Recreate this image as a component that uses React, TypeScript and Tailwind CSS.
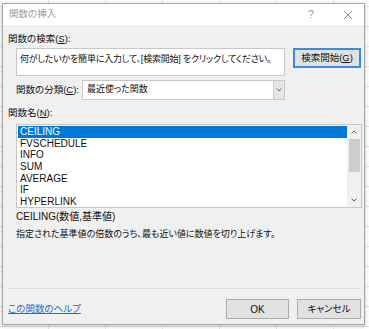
import React from "react";

const FONT = "font-['Liberation_Sans','Noto_Sans_CJK_JP',sans-serif] [font-feature-settings:'palt']";

const FUNCTIONS = ["CEILING", "FVSCHEDULE", "INFO", "SUM", "AVERAGE", "IF", "HYPERLINK"];

function Key({ k }: { k: string }) {
    return <span className="underline underline-offset-1">{k}</span>;
}

export default function App() {
    return (
        <div className={`${FONT} w-[369px] h-[329px] overflow-hidden bg-white bg-[linear-gradient(to_right,#e3e3e3_1px,transparent_1px),linear-gradient(to_bottom,#e3e3e3_1px,transparent_1px)] bg-[size:57px_20px] bg-[position:48px_6px] pt-[3px] pl-[2px]`}>
            <div className="w-[363px] h-[322px] border border-[#a8a8a8] bg-[#f0f0f0] shadow-[0_1px_4px_rgba(0,0,0,0.25)] flex flex-col text-[9px] text-[#111] whitespace-nowrap">
                {/* Title bar */}
                <div className="h-[21px] bg-white flex items-center pl-[6px] text-[#9a9a9a] text-[9.5px]">
                    <span className="flex-1">関数の挿入</span>
                    <span className="w-[20px] text-center text-[11px] mr-[22px]">?</span>
                    <svg width="10" height="10" viewBox="0 0 10 10" className="mr-[11px]">
                        <path d="M1 1 L9 9 M9 1 L1 9" stroke="#8a8a8a" strokeWidth="1" />
                    </svg>
                </div>

                {/* Body */}
                <div className="flex flex-col pl-[5px] pr-[3px]">
                    <div className="mt-[7px] h-[14px] leading-[14px] text-[9.5px]">関数の検索(<Key k="S" />):</div>

                    <div className="mt-[2px] flex items-start">
                        <div className="ml-[8px] w-[269px] h-[28px] bg-white border border-[#c8c8c8] px-[3px] pt-[3px] leading-[14px] tracking-[-0.2px]">
                            何がしたいかを簡単に入力して、[検索開始] をクリックしてください。
                        </div>
                        <button className="ml-[8px] w-[68px] h-[20px] bg-[#e1e1e1] border border-[#3c8be0] outline outline-1 outline-[#3c8be0] -outline-offset-2 flex items-center justify-center leading-none text-[9.5px]">
                            検索開始(<Key k="G" />)
                        </button>
                    </div>

                    <div className="mt-[4px] flex items-center">
                        <span className="ml-[8px] w-[66px] leading-[14px] text-[9.5px]">関数の分類(<Key k="C" />):</span>
                        <div className="w-[203px] h-[20px] bg-white border border-[#c8c8c8] flex items-center">
                            <span className="flex-1 pl-[4px]">最近使った関数</span>
                            <div className="w-[11px] h-full bg-[#e6e6e6] border-l border-[#d0d0d0] flex items-center justify-center">
                                <svg width="6" height="4" viewBox="0 0 6 4">
                                    <path d="M0.5 0.5 L3 3 L5.5 0.5" stroke="#707070" fill="none" strokeWidth="1" />
                                </svg>
                            </div>
                        </div>
                    </div>

                    <div className="mt-[6px] h-[14px] leading-[14px] text-[9.5px]">関数名(<Key k="N" />):</div>

                    <div className="mt-[4px] ml-[8px] w-[346px] h-[84px] bg-white border border-[#c8c8c8] flex">
                        <div className="flex-1 pt-[1px] pl-[1px]">
                            {FUNCTIONS.map((f, i) => (
                                <div key={f} className={`h-[11.7px] leading-[11.7px] pl-[2px] text-[10px] ${i === 0 ? "bg-[#0078d7] text-white" : "text-[#111]"}`}>
                                    {f}
                                </div>
                            ))}
                        </div>
                        <div className="w-[14px] bg-[#f0f0f0] flex flex-col items-center">
                            <div className="h-[14px] flex items-center justify-center">
                                <svg width="6" height="4" viewBox="0 0 6 4">
                                    <path d="M0.5 3.5 L3 1 L5.5 3.5" stroke="#606060" fill="none" strokeWidth="1" />
                                </svg>
                            </div>
                            <div className="w-[11px] h-[33px] bg-[#cdcdcd]" />
                            <div className="flex-1" />
                            <div className="h-[14px] flex items-center justify-center">
                                <svg width="6" height="4" viewBox="0 0 6 4">
                                    <path d="M0.5 0.5 L3 3 L5.5 0.5" stroke="#606060" fill="none" strokeWidth="1" />
                                </svg>
                            </div>
                        </div>
                    </div>

                    <div className="mt-[2px] ml-[8px] h-[14px] leading-[14px] text-[10px]">CEILING(数値,基準値)</div>
                    <div className="mt-[3px] ml-[8px] h-[14px] leading-[14px]">指定された基準値の倍数のうち、最も近い値に数値を切り上げます。</div>

                    <div className="mt-[47px] h-px bg-[#dcdcdc] mr-[1px]" />

                    <div className="mt-[10px] flex items-center">
                        <a className="flex-1 text-[#1a6fd0] underline underline-offset-1 leading-[14px] cursor-pointer text-[9.5px]">この関数のヘルプ</a>
                        <button className="w-[63px] h-[20px] bg-[#e1e1e1] border border-[#adadad] flex items-center justify-center text-[10px]">OK</button>
                        <button className="ml-[8px] w-[64px] h-[20px] bg-[#e1e1e1] border border-[#adadad] flex items-center justify-center text-[9.5px]">キャンセル</button>
                    </div>
                </div>
            </div>
        </div>
    );
}
